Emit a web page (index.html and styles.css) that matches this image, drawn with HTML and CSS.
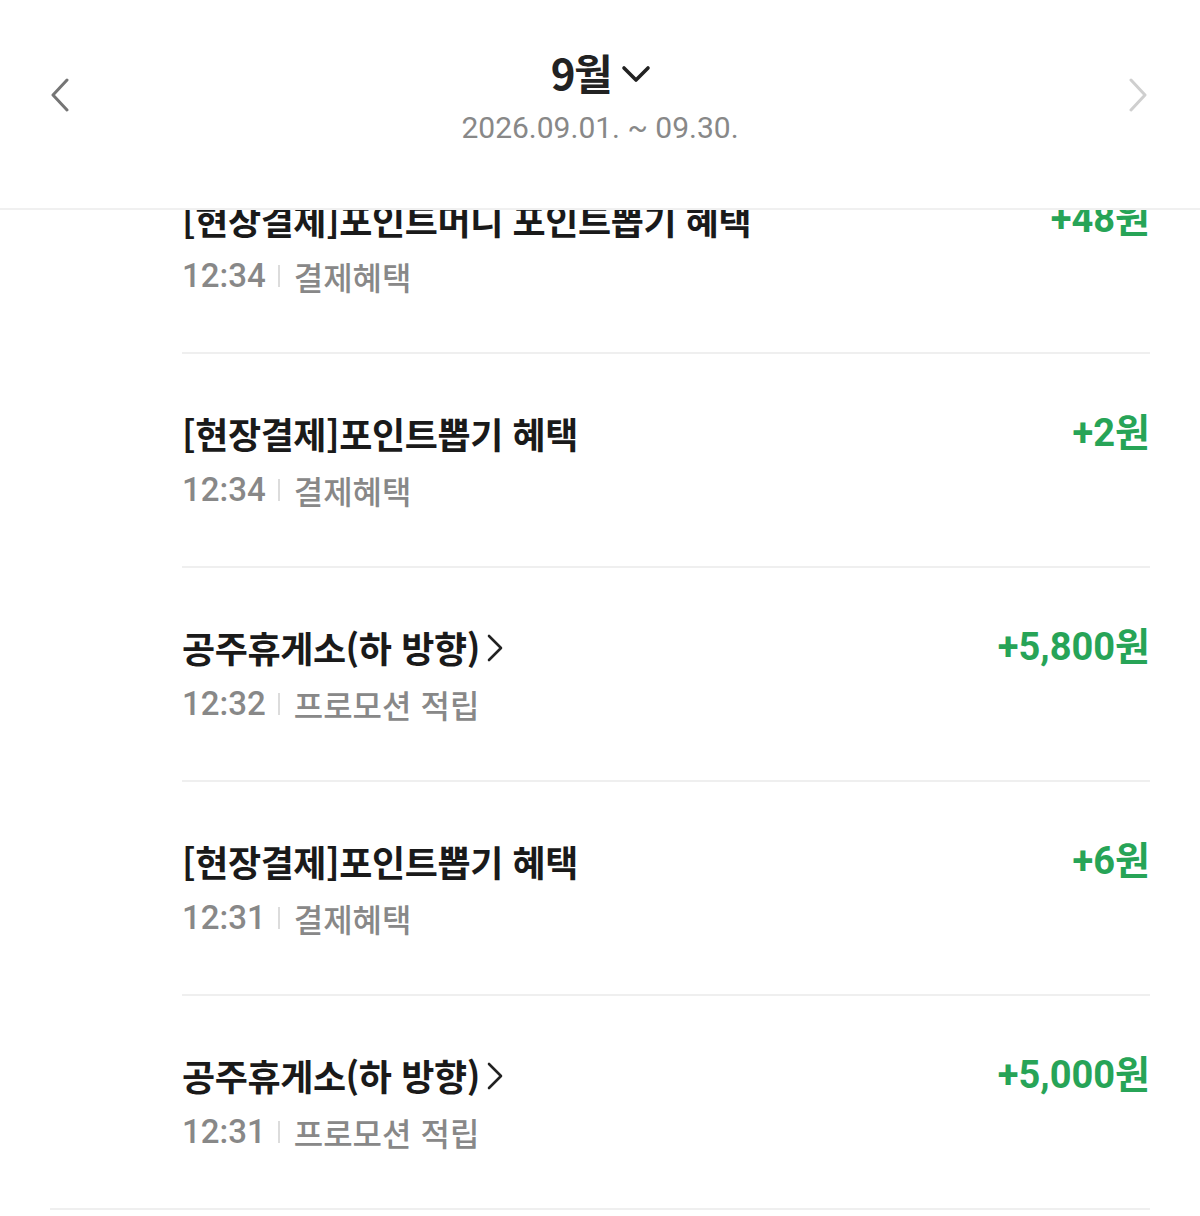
FILE: index.html
```html
<!DOCTYPE html>
<html lang="ko">
<head>
<meta charset="utf-8">
<link rel="stylesheet" href="styles.css">
</head>
<body>
<div class="screen">
  <header class="header">
    <button class="nav nav-prev" aria-label="이전 달">
      <svg width="20" height="34" viewBox="0 0 20 34"><path d="M17 2 L3 17 L17 32" fill="none" stroke="#757575" stroke-width="3" stroke-linecap="round" stroke-linejoin="round"/></svg>
    </button>
    <div class="period">
      <div class="month">9월<svg class="month-caret" width="30" height="18" viewBox="0 0 30 18"><path d="M3 3 L15 15 L27 3" fill="none" stroke="#222" stroke-width="3.6" stroke-linecap="round" stroke-linejoin="round"/></svg></div>
      <div class="range">2026.09.01. ~ 09.30.</div>
    </div>
    <button class="nav nav-next" aria-label="다음 달">
      <svg width="20" height="34" viewBox="0 0 20 34"><path d="M3 2 L17 17 L3 32" fill="none" stroke="#cfcfcf" stroke-width="3" stroke-linecap="round" stroke-linejoin="round"/></svg>
    </button>
  </header>
  <main class="list">
    <div class="scroll">
      <div class="row">
        <div class="row-top"><span class="title">[현장결제]포인트머니 포인트뽑기 혜택</span><span class="amount">+48원</span></div>
        <div class="meta"><span class="time">12:34</span><span class="sep"></span><span class="kind">결제혜택</span></div>
      </div>
      <div class="row">
        <div class="row-top"><span class="title">[현장결제]포인트뽑기 혜택</span><span class="amount">+2원</span></div>
        <div class="meta"><span class="time">12:34</span><span class="sep"></span><span class="kind">결제혜택</span></div>
      </div>
      <div class="row">
        <div class="row-top"><span class="title">공주휴게소(하 방향)<svg class="go" width="18" height="30" viewBox="0 0 18 30"><path d="M3 3 L15 15 L3 27" fill="none" stroke="#222" stroke-width="2.6" stroke-linecap="round" stroke-linejoin="round"/></svg></span><span class="amount">+5,800원</span></div>
        <div class="meta"><span class="time">12:32</span><span class="sep"></span><span class="kind">프로모션 적립</span></div>
      </div>
      <div class="row">
        <div class="row-top"><span class="title">[현장결제]포인트뽑기 혜택</span><span class="amount">+6원</span></div>
        <div class="meta"><span class="time">12:31</span><span class="sep"></span><span class="kind">결제혜택</span></div>
      </div>
      <div class="row last">
        <div class="row-top"><span class="title">공주휴게소(하 방향)<svg class="go" width="18" height="30" viewBox="0 0 18 30"><path d="M3 3 L15 15 L3 27" fill="none" stroke="#222" stroke-width="2.6" stroke-linecap="round" stroke-linejoin="round"/></svg></span><span class="amount">+5,000원</span></div>
        <div class="meta"><span class="time">12:31</span><span class="sep"></span><span class="kind">프로모션 적립</span></div>
      </div>
      <div class="group-divider"></div>
    </div>
  </main>
</div>
</body>
</html>
```

FILE: styles.css
```css
* { box-sizing: border-box; }
html, body { margin: 0; padding: 0; background: #fff; }
body {
  font-family: Roboto, "Noto Sans CJK KR", sans-serif;
  color: #222;
}
.screen {
  width: 1200px;
  height: 1216px;
  overflow: hidden;
  display: flex;
  flex-direction: column;
}
.header {
  height: 210px;
  flex: none;
  border-bottom: 2px solid #f0f0f0;
  display: flex;
  align-items: flex-start;
  justify-content: space-between;
  padding: 0 50px 0 50px;
}
.nav {
  border: 0;
  background: none;
  padding: 0;
  margin-top: 78px;
  width: 22px;
  height: 34px;
  display: flex;
}
.period {
  display: flex;
  flex-direction: column;
  align-items: center;
  padding-top: 43px;
}
.month {
  font-family: "Noto Sans CJK KR", sans-serif;
  font-weight: 700;
  font-size: 42px;
  line-height: 58px;
  letter-spacing: -1.5px;
  display: flex;
  align-items: center;
  gap: 10px;
  padding-left: 2px;
}
.month-caret { margin-top: 4px; }
.range {
  margin-top: 6px;
  font-size: 30px;
  line-height: 42px;
  color: #888;
  letter-spacing: 0;
}
.list {
  flex: 1;
  overflow: hidden;
}
.scroll { margin-top: -70px; }
.row {
  margin: 0 50px 0 182px;
  padding: 57px 0 56px;
  border-bottom: 2px solid #efefef;
}
.row.last { border-bottom: 0; }
.row-top {
  display: flex;
  justify-content: space-between;
  align-items: center;
  height: 44px;
}
.title {
  font-family: "Noto Sans CJK KR", sans-serif;
  font-weight: 700;
  font-size: 36px;
  letter-spacing: -0.4px;
  line-height: 44px;
  color: #1a1a1a;
  display: flex;
  align-items: center;
}
.go { margin-left: 6px; margin-top: 2px; }
.amount {
  font-family: Roboto, "Noto Sans CJK KR", sans-serif;
  font-weight: 700;
  font-size: 38px;
  letter-spacing: 0;
  line-height: 44px;
  color: #27a457;
}
.meta {
  margin-top: 15px;
  height: 40px;
  display: flex;
  align-items: center;
  color: #888;
  font-size: 33px;
  line-height: 40px;
}
.time { letter-spacing: 0; font-weight: 500; }
.sep {
  width: 2px;
  height: 22px;
  background: #dcdcdc;
  margin: 0 14px 0 12px;
}
.kind {
  font-family: "Noto Sans CJK KR", sans-serif;
  letter-spacing: 0;
  font-size: 32px;
  font-weight: 500;
}
.group-divider {
  margin: 0 50px;
  border-top: 2px solid #efefef;
}
```
